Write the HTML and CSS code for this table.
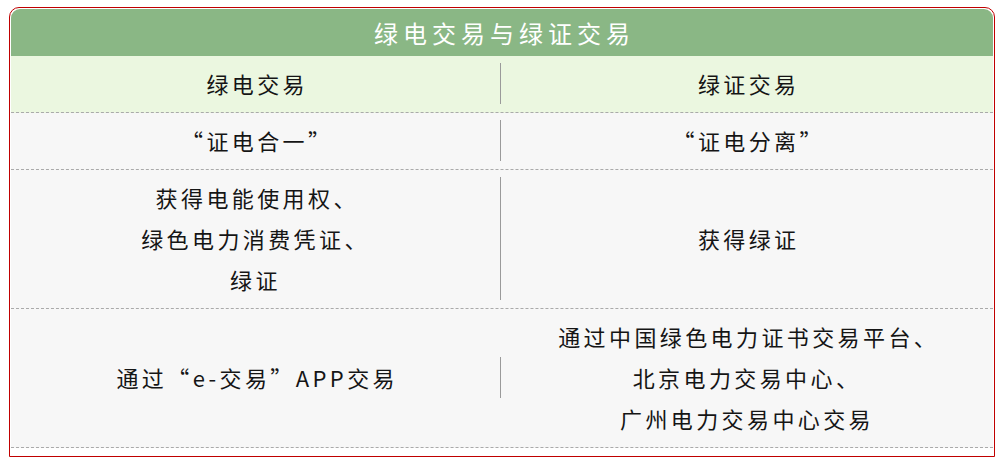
FILE: index.html
```html
<!DOCTYPE html>
<html lang="zh-CN">
<head>
<meta charset="utf-8">
<link rel="stylesheet" href="styles.css">
</head>
<body>
<div class="panel">
  <div class="title">绿电交易与绿证交易</div>
  <div class="row head">
    <div class="cell left"><div class="txt">绿电交易</div></div>
    <div class="cell right"><div class="txt">绿证交易</div></div>
  </div>
  <div class="row">
    <div class="cell left"><div class="txt">“证电合一”</div></div>
    <div class="cell right"><div class="txt">“证电分离”</div></div>
  </div>
  <div class="row">
    <div class="cell left"><div class="txt">获得电能使用权、<br>绿色电力消费凭证、<br>绿证</div></div>
    <div class="cell right"><div class="txt">获得绿证</div></div>
  </div>
  <div class="row">
    <div class="cell left"><div class="txt">通过“e-交易”APP交易</div></div>
    <div class="cell right"><div class="txt">通过中国绿色电力证书交易平台、<br>北京电力交易中心、<br>广州电力交易中心交易</div></div>
  </div>
</div>
</body>
</html>
```
FILE: styles.css
```css
html, body {
  margin: 0;
  padding: 0;
  background: #ffffff;
}
body {
  font-family: "Noto Sans CJK SC", "Noto Sans", sans-serif;
  color: #151515;
}
.panel {
  box-sizing: border-box;
  width: 986px;
  margin: 7px 0 0 9px;
  border: 1px solid #c00000;
  border-radius: 10px 10px 0 0;
  padding: 1px 1px 8px 1px;
  background: #ffffff;
}
.title {
  height: 47px;
  background: #8ab785;
  border-radius: 9px 9px 0 0;
  color: #ffffff;
  font-size: 24px;
  letter-spacing: 5px;
  text-indent: 5px;
  display: flex;
  align-items: center;
  justify-content: center;
}
.row {
  display: grid;
  grid-template-columns: 490px 492px;
  align-items: center;
  padding: 7px 0 8px 0;
  border-bottom: 1px dashed #aaaaaa;
  background: #f7f7f7;
}
.row.head {
  background: #ebf7e0;
}
.cell {
  text-align: center;
  font-size: 22px;
  line-height: 41px;
  letter-spacing: 3.4px;
}
.cell .txt {
  text-indent: 3.4px;
}
.left {
  border-right: 1px solid #9a9a9a;
}
```
